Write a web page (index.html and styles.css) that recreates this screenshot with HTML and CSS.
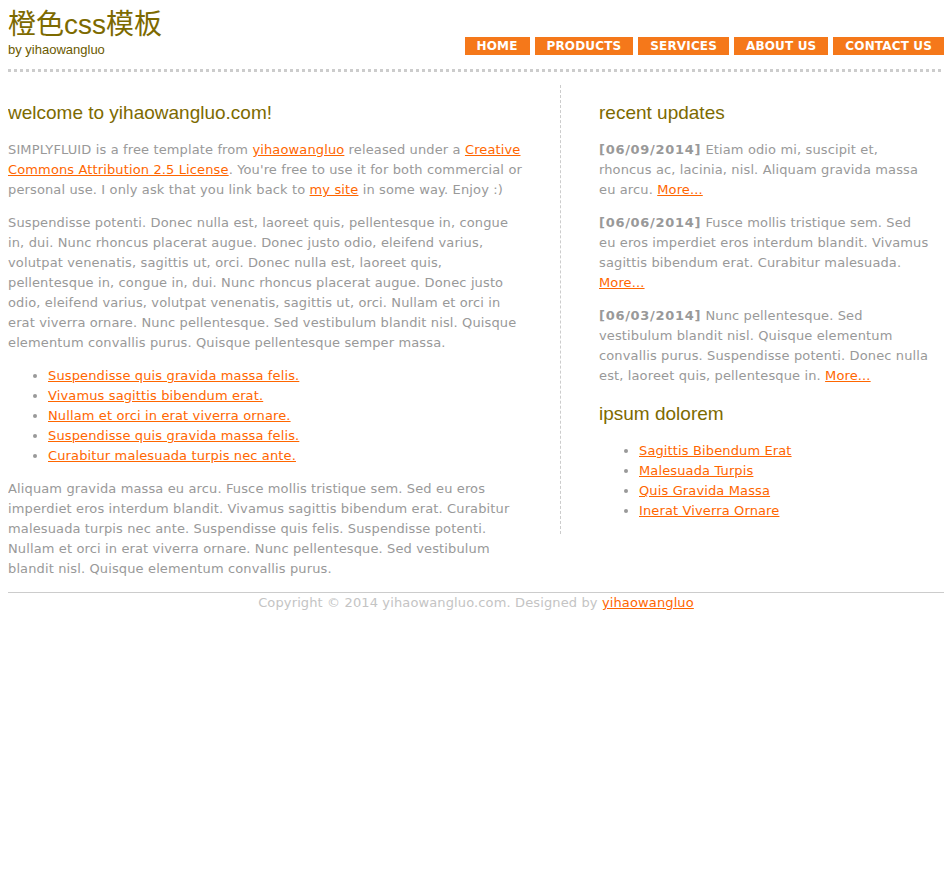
FILE: index.html
```html
<!DOCTYPE html>
<html lang="zh">
<head>
<meta charset="utf-8">
<title>橙色css模板</title>
<link rel="stylesheet" href="styles.css">
</head>
<body>
<div class="page">
  <header class="header">
    <div class="brand">
      <h1 class="site-title">橙色css模板</h1>
      <div class="site-sub">by yihaowangluo</div>
    </div>
    <nav class="nav">
      <a class="nav-item" href="#">Home</a>
      <a class="nav-item" href="#">Products</a>
      <a class="nav-item" href="#">Services</a>
      <a class="nav-item" href="#">About us</a>
      <a class="nav-item" href="#">Contact us</a>
    </nav>
  </header>
  <div class="dots"></div>

  <main class="main">
    <section class="content">
      <h2 class="heading">welcome to yihaowangluo.com!</h2>
      <p>SIMPLYFLUID is a free template from <a href="#">yihaowangluo</a> released under a <a href="#">Creative Commons Attribution 2.5 License</a>. You're free to use it for both commercial or personal use. I only ask that you link back to <a href="#">my site</a> in some way. Enjoy :)</p>
      <p>Suspendisse potenti. Donec nulla est, laoreet quis, pellentesque in, congue in, dui. Nunc rhoncus placerat augue. Donec justo odio, eleifend varius, volutpat venenatis, sagittis ut, orci. Donec nulla est, laoreet quis, pellentesque in, congue in, dui. Nunc rhoncus placerat augue. Donec justo odio, eleifend varius, volutpat venenatis, sagittis ut, orci. Nullam et orci in erat viverra ornare. Nunc pellentesque. Sed vestibulum blandit nisl. Quisque elementum convallis purus. Quisque pellentesque semper massa.</p>
      <ul class="list">
        <li><a href="#">Suspendisse quis gravida massa felis.</a></li>
        <li><a href="#">Vivamus sagittis bibendum erat.</a></li>
        <li><a href="#">Nullam et orci in erat viverra ornare.</a></li>
        <li><a href="#">Suspendisse quis gravida massa felis.</a></li>
        <li><a href="#">Curabitur malesuada turpis nec ante.</a></li>
      </ul>
      <p>Aliquam gravida massa eu arcu. Fusce mollis tristique sem. Sed eu eros imperdiet eros interdum blandit. Vivamus sagittis bibendum erat. Curabitur malesuada turpis nec ante. Suspendisse quis felis. Suspendisse potenti. Nullam et orci in erat viverra ornare. Nunc pellentesque. Sed vestibulum blandit nisl. Quisque elementum convallis purus.</p>
    </section>

    <aside class="sidebar">
      <h2 class="heading">recent updates</h2>
      <p><strong class="date">[06/09/2014]</strong> Etiam odio mi, suscipit et, rhoncus ac, lacinia, nisl. Aliquam gravida massa eu arcu. <a href="#">More...</a></p>
      <p><strong class="date">[06/06/2014]</strong> Fusce mollis tristique sem. Sed eu eros imperdiet eros interdum blandit. Vivamus sagittis bibendum erat. Curabitur malesuada. <a href="#">More...</a></p>
      <p><strong class="date">[06/03/2014]</strong> Nunc pellentesque. Sed vestibulum blandit nisl. Quisque elementum convallis purus. Suspendisse potenti. Donec nulla est, laoreet quis, pellentesque in. <a href="#">More...</a></p>
      <h2 class="heading">ipsum dolorem</h2>
      <ul class="list">
        <li><a href="#">Sagittis Bibendum Erat</a></li>
        <li><a href="#">Malesuada Turpis</a></li>
        <li><a href="#">Quis Gravida Massa</a></li>
        <li><a href="#">Inerat Viverra Ornare</a></li>
      </ul>
    </aside>
  </main>

  <footer class="footer">Copyright © 2014 yihaowangluo.com. Designed by <a href="#">yihaowangluo</a></footer>
</div>
</body>
</html>
```

FILE: styles.css
```css
html, body {
  background: #fff;
}
body {
  margin: 8px;
  font-family: "DejaVu Sans", Verdana, sans-serif;
  font-size: 13px;
  line-height: 20px;
  letter-spacing: 0.13px;
  color: #999;
}
a {
  color: #ff6600;
  text-decoration: underline;
}
.page {
  width: 936px;
}
.header {
  display: flex;
  justify-content: space-between;
  align-items: flex-end;
}
.brand {
  display: flex;
  flex-direction: column;
}
.site-title {
  margin: 0;
  font-family: "Liberation Sans", "Noto Sans CJK SC", sans-serif;
  font-weight: normal;
  font-size: 28px;
  line-height: 34px;
  letter-spacing: 0;
  color: #7d6a00;
}
.site-sub {
  font-family: "Liberation Sans", Arial, sans-serif;
  font-size: 13px;
  line-height: 16px;
  letter-spacing: 0;
  color: #6b5a00;
}
.nav {
  display: flex;
  gap: 5px;
  margin-bottom: 3px;
}
.nav-item {
  display: block;
  background: #f5781a;
  color: #fff;
  text-decoration: none;
  text-transform: uppercase;
  font-family: "DejaVu Sans", Verdana, sans-serif;
  font-weight: bold;
  font-size: 12px;
  line-height: 18px;
  letter-spacing: 0.15px;
  padding: 0 12px;
}
.dots {
  height: 3px;
  margin-top: 11px;
  background: repeating-linear-gradient(to right, #ccc 0 3px, transparent 3px 6px);
}
.main {
  display: flex;
  align-items: flex-start;
  margin-top: 13px;
}
.content {
  width: 515px;
  padding-top: 16px;
}
.sidebar {
  margin-left: 37px;
  border-left: 1px dashed #ccc;
  padding: 16px 0 0 38px;
  width: 330px;
}
.date {
  letter-spacing: 0.7px;
}
.heading {
  margin: 16px 0 15px;
  font-family: "Liberation Sans", Arial, sans-serif;
  font-weight: normal;
  font-size: 19px;
  line-height: 24px;
  letter-spacing: 0;
  color: #7d6a00;
}
.content > .heading:first-child,
.sidebar > .heading:first-child {
  margin-top: 0;
}
p {
  margin: 13px 0;
}
.heading + p {
  margin-top: 0;
}
.list {
  margin: 13px 0;
  padding-left: 40px;
}
.heading + .list {
  margin-top: 0;
}
.footer {
  border-top: 1px solid #ccc;
  text-align: center;
  color: #c4c4c4;
}
```
